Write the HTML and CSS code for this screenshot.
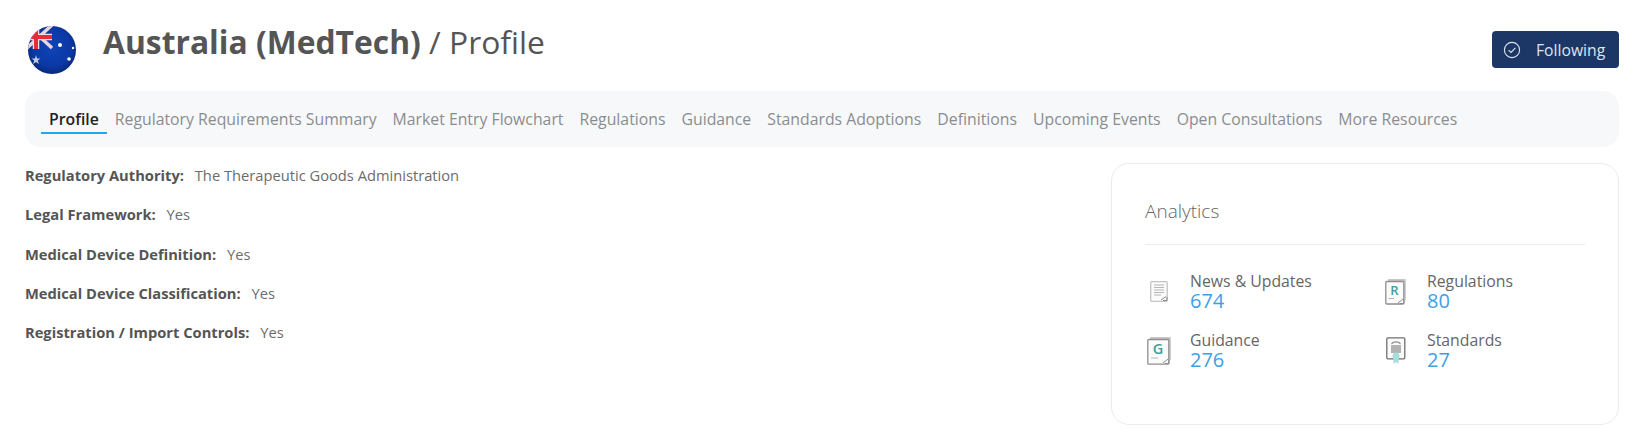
FILE: index.html
```html
<!DOCTYPE html>
<html>

<head>
    <title>Australia (MedTech) / Profile</title>
    <link rel="stylesheet" href="styles.css">
</head>

<body>
    <div class="page">
        <div class="header">
            <svg class="flag" viewBox="0 0 50 50">
                <defs>
                    <clipPath id="ball"><circle cx="25" cy="25" r="24"></circle></clipPath>
                    <radialGradient id="sea" cx="50%" cy="45%" r="55%">
                        <stop offset="0" stop-color="#0f44b8"></stop>
                        <stop offset="0.7" stop-color="#0b38a4"></stop>
                        <stop offset="1" stop-color="#0a2674"></stop>
                    </radialGradient>
                </defs>
                <g clip-path="url(#ball)">
                    <rect width="50" height="50" fill="url(#sea)"></rect>
                    <path d="M0 0 L25 23 M25 0 L0 23" stroke="#e9d3dc" stroke-width="3.500"></path>
                    <path d="M0 12 H25 M9 0 V24" stroke="#f1dfe4" stroke-width="6.500"></path>
                    <path d="M0 12 H25 M9 0 V24" stroke="#e62e38" stroke-width="4"></path>
                </g>
                <circle class="star" cx="33" cy="20" r="2"></circle>
                <circle class="star" cx="46" cy="23" r="1.200"></circle>
                <circle class="star" cx="42" cy="34" r="1.800"></circle>
                <path class="star dim" d="M9 30 L10 33.500 L13.500 33.500 L10.700 35.500 L12 39 L9 37 L6 39 L7.300 35.500 L4.500 33.500 L8 33.500 Z"></path>
            </svg>
            <h1 class="title"><b>Australia (MedTech)</b> / Profile</h1>
            <div class="follow">
                <svg class="check" viewBox="0 0 18 18">
                    <circle cx="9" cy="9" r="7.600"></circle>
                    <path d="M5.600 9.200 L8 11.500 L12.400 6.900"></path>
                </svg>
                <span>Following</span>
            </div>
        </div>

        <div class="tabs">
            <div class="tab active">Profile</div>
            <div class="tab">Regulatory Requirements Summary</div>
            <div class="tab">Market Entry Flowchart</div>
            <div class="tab">Regulations</div>
            <div class="tab">Guidance</div>
            <div class="tab">Standards Adoptions</div>
            <div class="tab">Definitions</div>
            <div class="tab">Upcoming Events</div>
            <div class="tab">Open Consultations</div>
            <div class="tab">More Resources</div>
        </div>

        <div class="content">
            <div class="facts">
                <div class="fact"><b>Regulatory Authority:</b> The Therapeutic Goods Administration</div>
                <div class="fact"><b>Legal Framework:</b> Yes</div>
                <div class="fact"><b>Medical Device Definition:</b> Yes</div>
                <div class="fact"><b>Medical Device Classification:</b> Yes</div>
                <div class="fact"><b>Registration / Import Controls:</b> Yes</div>
            </div>

            <div class="card">
                <div class="card-title">Analytics</div>
                <div class="stats">
                    <div class="stat">
                        <div class="stat-icon">
                            <svg width="18" height="21" viewBox="0 0 18 21">
                                <rect class="sheet light" x="0.700" y="0.700" width="16.500" height="19.600" rx="1"></rect>
                                <path class="lines" d="M4 4 H14 M4 6.500 H14 M4 9 H14 M4 11.500 H14 M4 14 H11"></path>
                                <path class="corner" d="M11 19 L16 15.500 M13 19.500 H17 V16"></path>
                            </svg>
                        </div>
                        <div>
                            <div class="stat-name">News &amp; Updates</div>
                            <div class="stat-num">674</div>
                        </div>
                    </div>
                    <div class="stat">
                        <div class="stat-icon">
                            <svg width="21" height="26" viewBox="0 0 21 26">
                                <path class="back" d="M3 1 H20 V21"></path>
                                <rect class="sheet" x="0.800" y="2.500" width="18" height="22.500" rx="1"></rect>
                                <text class="letter" x="9.500" y="15.500" font-size="13">R</text>
                                <path class="lines" d="M3.500 19.500 H9"></path>
                                <path class="corner" d="M13 24 L18 20 M15 24.500 H19 V21"></path>
                            </svg>
                        </div>
                        <div>
                            <div class="stat-name">Regulations</div>
                            <div class="stat-num">80</div>
                        </div>
                    </div>
                    <div class="stat">
                        <div class="stat-icon">
                            <svg width="24" height="28" viewBox="0 0 24 28">
                                <path class="back" d="M3 1 H23 V23"></path>
                                <rect class="sheet" x="0.800" y="2.500" width="21" height="24.700" rx="1"></rect>
                                <text class="letter" x="11" y="16.500" font-size="14.500">G</text>
                                <path class="lines" d="M4 21 H11"></path>
                                <path class="corner" d="M16 26 L21 22 M18 26.500 H22 V23"></path>
                            </svg>
                        </div>
                        <div>
                            <div class="stat-name">Guidance</div>
                            <div class="stat-num">276</div>
                        </div>
                    </div>
                    <div class="stat">
                        <div class="stat-icon">
                            <svg width="20" height="27" viewBox="0 0 20 27">
                                <rect class="sheet dark" x="0.800" y="0.800" width="18" height="21" rx="1"></rect>
                                <path class="block" d="M6 7 Q6 5 10 5 Q14 5 14 7 M5 9 H15 M5 11 H15 M5 13 H15 M5 15 H15"></path>
                                <path class="ribbon" d="M7.500 20 V27 L10 25 L12.500 27 V20 Z"></path>
                                <circle class="ribbon" cx="10" cy="19" r="3.500"></circle>
                            </svg>
                        </div>
                        <div>
                            <div class="stat-name">Standards</div>
                            <div class="stat-num">27</div>
                        </div>
                    </div>
                </div>
            </div>
        </div>
    </div>
</body></html>
```
FILE: styles.css
```css
body {
    background-color: white;
    font-family: "Open Sans", sans-serif;
    color: #555;
    margin: 0;
}

.page {
    padding: 25px 23px 0 25px;
}

.header {
    display: flex;
    align-items: flex-start;
    height: 66px;
}

.flag {
    width: 50px;
    height: 50px;
    margin-left: 2px;
    margin-right: 26px;
}

.star {
    fill: #fff;
}

.star.dim {
    fill: #c3cce2;
}

.title {
    flex: 1;
    margin: -1px 0 0;
    font-size: 31.800px;
    line-height: 36px;
    font-weight: 400;
}

.follow {
    display: flex;
    align-items: center;
    width: 127px;
    height: 37px;
    margin-top: 6px;
    box-sizing: border-box;
    padding-left: 11px;
    background-color: #1c3766;
    color: #dfe5ee;
    border-radius: 4px;
    font-size: 15.700px;
}

.check {
    width: 18px;
    height: 18px;
    margin-right: 15px;
    fill: none;
    stroke: #dfe5ee;
    stroke-width: 1.100;
}

.tabs {
    display: flex;
    gap: 16px;
    height: 56px;
    box-sizing: border-box;
    padding: 15px 16px 0;
    background-color: #f7f8fa;
    border-radius: 16px;
}

.tab {
    font-size: 15.800px;
    line-height: 26px;
    height: 28px;
    box-sizing: border-box;
    color: #8a8d90;
}

.tab.active {
    color: #222;
    font-weight: 600;
    border-bottom: 2px solid #19a9f0;
    padding: 0 8px;
    margin-right: -8px;
}

.content {
    display: flex;
    justify-content: space-between;
    margin-top: 16px;
}

.facts {
    padding-top: 2px;
}

.fact {
    font-size: 14.700px;
    line-height: 20px;
    margin-bottom: 19.300px;
    color: #6c6c6c;
}

.fact b {
    font-weight: 700;
    color: #555;
    margin-right: 7px;
}

.card {
    width: 508px;
    height: 262px;
    box-sizing: border-box;
    padding: 35px 33px 0;
    border: 1px solid #ebebeb;
    border-radius: 18px;
}

.card-title {
    font-size: 19px;
    line-height: 25px;
    font-weight: 300;
    color: #666;
    padding-bottom: 20px;
    border-bottom: 1px solid #ececec;
}

.stats {
    display: grid;
    grid-template-columns: 237px 1fr;
    row-gap: 20px;
    margin-top: 27px;
}

.stat {
    display: flex;
    align-items: center;
}

.stat-icon {
    display: flex;
    justify-content: center;
    width: 45px;
    padding-right: 18px;
    box-sizing: border-box;
}

.stat-name {
    font-size: 15.800px;
    line-height: 19px;
    color: #666;
}

.stat-num {
    font-size: 20px;
    line-height: 20px;
    color: #3d9fe6;
}

.sheet {
    fill: #fbfbfb;
    stroke: #8f8f8f;
    stroke-width: 1.300;
}

.sheet.light {
    stroke: #c4c4c4;
}

.sheet.dark {
    stroke: #6f6f6f;
}

.back {
    fill: none;
    stroke: #b5b5b5;
    stroke-width: 1.300;
}

.lines {
    fill: none;
    stroke: #b5b5b5;
    stroke-width: 1;
}

.corner {
    fill: none;
    stroke: #8c8c8c;
    stroke-width: 1;
}

.block {
    fill: none;
    stroke: #9a9a9a;
    stroke-width: 1.600;
}

.ribbon {
    fill: #a5dedb;
}

.letter {
    font-family: "Open Sans", sans-serif;
    font-weight: 600;
    fill: #3f9f9a;
    text-anchor: middle;
}
```
